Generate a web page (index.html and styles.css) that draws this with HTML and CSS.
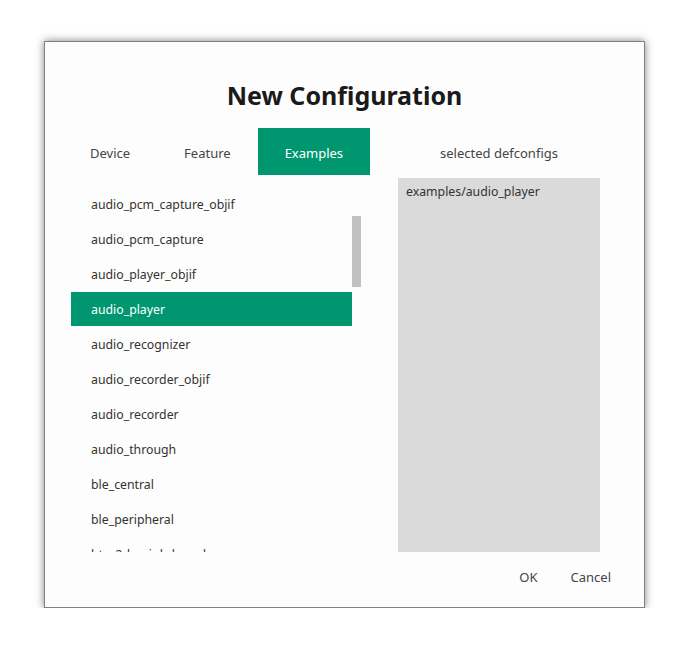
FILE: index.html
```html
<!DOCTYPE html>
<html>
<head>
    <title>New Configuration</title>
    <link rel="stylesheet" href="styles.css">
</head>
<body>
    <div class="dialog">
        <h1 class="title">New Configuration</h1>
        <div class="content">
            <div class="left">
                <div class="tabs">
                    <div class="tab">Device</div>
                    <div class="tab">Feature</div>
                    <div class="tab active">Examples</div>
                </div>
                <div class="list">
                    <div class="rows">
                        <div class="row">audio_pcm_capture_objif</div>
                        <div class="row">audio_pcm_capture</div>
                        <div class="row">audio_player_objif</div>
                        <div class="row selected">audio_player</div>
                        <div class="row">audio_recognizer</div>
                        <div class="row">audio_recorder_objif</div>
                        <div class="row">audio_recorder</div>
                        <div class="row">audio_through</div>
                        <div class="row">ble_central</div>
                        <div class="row">ble_peripheral</div>
                        <div class="row">bt_a2dp_sink_board</div>
                    </div>
                    <div class="thumb"></div>
                </div>
            </div>
            <div class="right">
                <div class="label">selected defconfigs</div>
                <div class="selected-box">examples/audio_player</div>
            </div>
        </div>
        <div class="footer">
            <button>OK</button>
            <button>Cancel</button>
        </div>
    </div>
</body>
</html>
```
FILE: styles.css
```css
:root {
    --accent: #009670;
    --text: #333;
    --panel: #dadada;
}

body {
    margin: 0;
    padding: 41px 0 0 44px;
    background: #fff;
    font-family: "Noto Sans", sans-serif;
    font-size: 12.3px;
    color: var(--text);
}

.dialog {
    width: 601px;
    height: 567px;
    box-sizing: border-box;
    background: #fdfdfd;
    border: 1px solid #808080;
    box-shadow: 0 0 8px rgba(0, 0, 0, 0.5);
}

.title {
    margin: 37px 0 0;
    height: 32px;
    line-height: 32px;
    font-size: 25px;
    font-weight: bold;
    color: #1a1a1a;
    text-align: center;
}

.content {
    display: flex;
    gap: 37px;
    margin-top: 17px;
    padding-left: 18px;
}

.left {
    width: 298px;
}

.tabs {
    display: flex;
    height: 47px;
}

.tab {
    padding: 4px 27px 0;
    line-height: 43px;
    font-size: 13px;
    color: #444;
}

.tab.active {
    background: var(--accent);
    color: #fff;
}

.list {
    position: relative;
    margin: 12px 0 0 8px;
    width: 290px;
    height: 365px;
    overflow: hidden;
}

.rows {
    width: 281px;
}

.row {
    height: 34px;
    line-height: 35px;
    margin-bottom: 1px;
    padding-left: 20px;
}

.row.selected {
    background: var(--accent);
    color: #fff;
}

.thumb {
    position: absolute;
    left: 281px;
    top: 29px;
    width: 9px;
    height: 71px;
    background: #c1c1c1;
}

.right {
    width: 202px;
}

.label {
    height: 47px;
    padding-top: 4px;
    box-sizing: border-box;
    line-height: 43px;
    text-align: center;
    font-size: 13px;
    color: #444;
}

.selected-box {
    margin-top: 3px;
    height: 374px;
    box-sizing: border-box;
    background: var(--panel);
    padding: 5px 8px;
}

.footer {
    display: flex;
    justify-content: flex-end;
    gap: 25px;
    margin-top: 14px;
    padding-right: 29px;
}

.footer button {
    border: 0;
    background: transparent;
    font-family: inherit;
    font-size: 13px;
    color: #444;
    padding: 2px 4px;
    cursor: pointer;
}
```
